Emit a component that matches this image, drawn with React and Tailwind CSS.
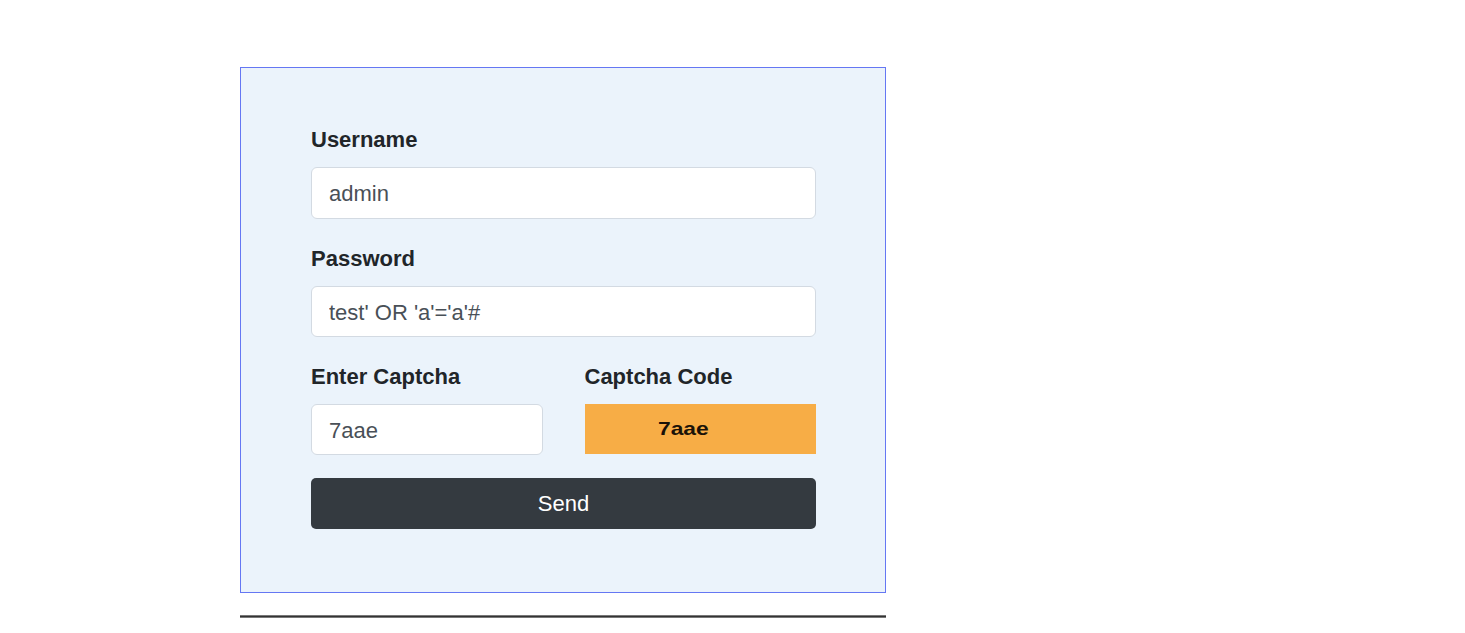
export default function App() {
  return (
    <div className="min-h-screen bg-white font-['Liberation_Sans',Arial,sans-serif] text-[#212529]">
      <div className="ml-[240px] w-[646px] pt-[67px]">
        {/* Login form */}
        <div className="border border-[#6577f3] bg-[#ebf3fb] pl-[70px] pr-[69px] pt-[57px] pb-[63px]">
          <label className="block text-[22px] leading-[30px] font-bold mb-[12px]">Username</label>
          <input
            className="block w-full h-[52px] bg-white border border-[#d3dae2] rounded-[6px] px-[17px] pt-[2px] text-[22px] text-[#495057] outline-none"
            defaultValue="admin"
          />

          <label className="block text-[22px] leading-[30px] font-bold mt-[25px] mb-[12px]">Password</label>
          <input
            className="block w-full h-[51px] bg-white border border-[#d3dae2] rounded-[6px] px-[17px] pt-[2px] text-[22px] text-[#495057] outline-none"
            defaultValue="test' OR 'a'='a'#"
          />

          <div className="grid grid-cols-2 gap-x-[42px] mt-[25px]">
            <div>
              <label className="block text-[22px] leading-[30px] font-bold mb-[12px]">Enter Captcha</label>
              <input
                className="block w-full h-[51px] bg-white border border-[#d3dae2] rounded-[6px] px-[17px] pt-[2px] text-[22px] text-[#495057] outline-none"
                defaultValue="7aae"
              />
            </div>
            <div>
              <label className="block text-[22px] leading-[30px] font-bold mb-[12px]">Captcha Code</label>
              <div className="h-[50px] bg-[#f7ad46] flex items-center pl-[73px]">
                <span className="text-[19px] font-bold text-[#1a1208] scale-x-120 origin-left">7aae</span>
              </div>
            </div>
          </div>

          <button className="mt-[23px] w-full h-[51px] rounded-[5px] bg-[#343a40] text-white text-[22px]">
            Send
          </button>
        </div>

        <div className="mt-[22px] h-[3px] bg-[#333] border-y border-[#777]" />
      </div>
    </div>
  );
}
